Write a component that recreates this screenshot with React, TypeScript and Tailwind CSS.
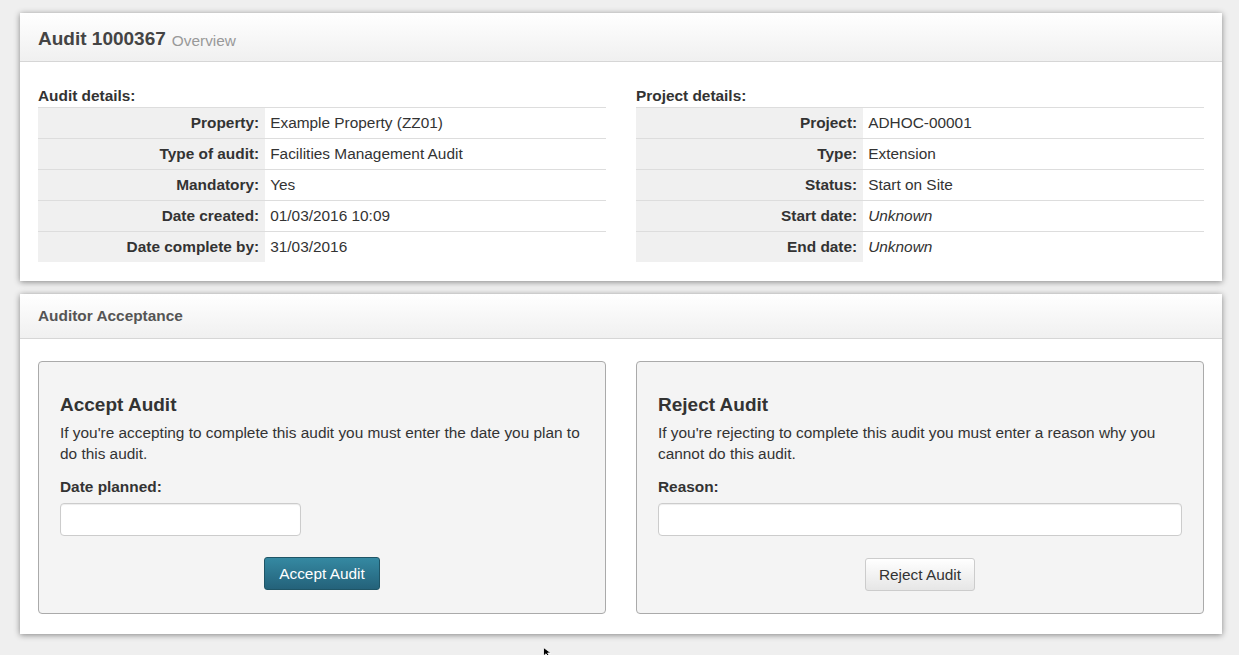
import React from 'react';

const auditRows: [string, React.ReactNode][] = [
  ['Property:', 'Example Property (ZZ01)'],
  ['Type of audit:', 'Facilities Management Audit'],
  ['Mandatory:', 'Yes'],
  ['Date created:', '01/03/2016 10:09'],
  ['Date complete by:', '31/03/2016'],
];

const projectRows: [string, React.ReactNode][] = [
  ['Project:', 'ADHOC-00001'],
  ['Type:', 'Extension'],
  ['Status:', 'Start on Site'],
  ['Start date:', <em key="s">Unknown</em>],
  ['End date:', <em key="e">Unknown</em>],
];

function DetailTable({ title, rows }: { title: string; rows: [string, React.ReactNode][] }) {
  return (
    <div className="flex-1">
      <div className="font-bold leading-[20px] h-[21px]">{title}</div>
      <table className="w-full border-collapse">
        <tbody>
          {rows.map(([label, value]) => (
            <tr key={label} className="border-t border-[#dddddd]">
              <th className="w-[40%] bg-[#f0f0f0] text-right font-bold px-[6px] py-[5px] leading-[20px]">{label}</th>
              <td className="text-left pl-[5px] pr-[6px] py-[5px] leading-[20px]">{value}</td>
            </tr>
          ))}
        </tbody>
      </table>
    </div>
  );
}

function Panel({ header, children, bodyClass }: { header: React.ReactNode; children: React.ReactNode; bodyClass: string }) {
  return (
    <div className="bg-white shadow-[0_1px_6px_rgba(0,0,0,0.45)]">
      <div className="bg-gradient-to-b from-white to-[#f0f0f0] border-b border-[#d6d6d6] px-[18px]">{header}</div>
      <div className={bodyClass}>{children}</div>
    </div>
  );
}

export default function App() {
  return (
    <div
      className="relative min-h-[655px] bg-[#efefef] pl-[20px] pr-[17px] pt-[13px] pb-[21px] text-[15.4px] text-[#333333] flex flex-col gap-[13px] [&_*]:box-border"
      style={{ fontFamily: '"Liberation Sans", Arial, sans-serif' }}
    >
      <Panel
        header={
          <div className="h-[48px] flex items-center pt-[5px]">
            <span className="text-[19px] font-bold text-[#444444]">Audit 1000367</span>
            <span className="ml-[6px] text-[15.4px] text-[#999999] mt-[2px]">Overview</span>
          </div>
        }
        bodyClass="px-[18px] pt-[24px] pb-[19px] flex gap-[30px]"
      >
        <DetailTable title="Audit details:" rows={auditRows} />
        <DetailTable title="Project details:" rows={projectRows} />
      </Panel>

      <Panel
        header={
          <div className="h-[44px] flex items-center">
            <span className="text-[15.4px] font-bold text-[#555555]">Auditor Acceptance</span>
          </div>
        }
        bodyClass="px-[18px] pt-[22px] pb-[20px] flex gap-[30px]"
      >
        <div className="flex-1 h-[253px] bg-[#f4f4f4] border border-[#aaaaaa] rounded-[4px] px-[21px] pt-[30px] flex flex-col">
          <h3 className="text-[19px] font-bold leading-[26px] text-[#333333]">Accept Audit</h3>
          <p className="mt-[4px] leading-[21px]">
            If you're accepting to complete this audit you must enter the date you plan to do this audit.
          </p>
          <label className="mt-[13px] font-bold leading-[20px]">Date planned:</label>
          <input
            type="text"
            className="mt-[6px] w-[241px] h-[33px] bg-white border border-[#cccccc] rounded-[4px] shadow-[inset_0_1px_1px_rgba(0,0,0,0.075)]"
          />
          <div className="mt-[21px] flex justify-center">
            <button className="h-[33px] px-[14px] text-[15.4px] text-white rounded-[3px] border border-[#1f5566] bg-gradient-to-b from-[#3589a2] to-[#24627a]">
              Accept Audit
            </button>
          </div>
        </div>

        <div className="flex-1 h-[253px] bg-[#f4f4f4] border border-[#aaaaaa] rounded-[4px] px-[21px] pt-[30px] flex flex-col">
          <h3 className="text-[19px] font-bold leading-[26px] text-[#333333]">Reject Audit</h3>
          <p className="mt-[4px] leading-[21px]">
            If you're rejecting to complete this audit you must enter a reason why you cannot do this audit.
          </p>
          <label className="mt-[13px] font-bold leading-[20px]">Reason:</label>
          <input
            type="text"
            className="mt-[6px] w-full h-[33px] bg-white border border-[#cccccc] rounded-[4px] shadow-[inset_0_1px_1px_rgba(0,0,0,0.075)]"
          />
          <div className="mt-[22px] flex justify-center">
            <button className="h-[33px] px-[13px] text-[15.4px] text-[#333333] rounded-[3px] border border-[#cccccc] bg-gradient-to-b from-white to-[#e6e6e6]">
              Reject Audit
            </button>
          </div>
        </div>
      </Panel>

      <svg className="absolute left-[543px] top-[647px]" width="10" height="10" viewBox="0 0 10 10">
        <path d="M0.5 0.5 L0.5 9 L3 6.8 L5 9.5 L6.5 8.8 L4.6 6 L8 6 Z" fill="#000" stroke="#fff" strokeWidth="0.8" />
      </svg>
    </div>
  );
}
